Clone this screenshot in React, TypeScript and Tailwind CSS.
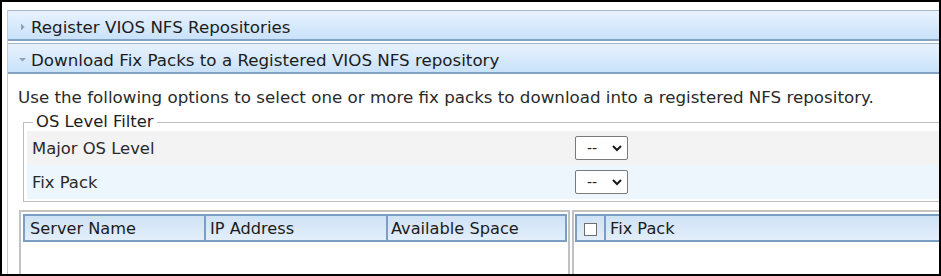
import React from 'react';

const font = { fontFamily: '"DejaVu Sans", Verdana, sans-serif' };

function SectionHeader({ title, open }: { title: string; open?: boolean }) {
  return (
    <div className="h-[31px] flex items-center border-t border-t-[#a4b6ca] border-b-2 border-b-[#83a2c4] bg-gradient-to-b from-[#e8f2fd] to-[#c9e2fa] pl-[11px] pt-[3px] text-[16.7px] text-[#1c1c1c]">
      <span className="w-[12px] flex items-center">
        {open ? (
          <svg width="8" height="8" viewBox="0 0 8 8">
            <path d="M0 2 L7 2 L3.5 5.5 Z" fill="#86a3c4" />
          </svg>
        ) : (
          <svg width="8" height="8" viewBox="0 0 8 8">
            <path d="M2 0.5 L5.5 4 L2 7.5 Z" fill="#86a3c4" />
          </svg>
        )}
      </span>
      <span className="whitespace-nowrap leading-[18px]">{title}</span>
    </div>
  );
}

function FakeSelect() {
  return (
    <div className="w-[53px] h-[24px] border border-[#7a7a7a] rounded-[2px] bg-white flex items-center justify-between pl-[11px] pr-[4px] text-[14px] text-[#222]">
      <span>--</span>
      <svg width="12" height="10" viewBox="0 0 12 10">
        <path d="M2 3 L6 7 L10 3" stroke="#1a1a1a" strokeWidth="2" fill="none" />
      </svg>
    </div>
  );
}

function FilterRow({ label, shade }: { label: string; shade: string }) {
  return (
    <div className={`h-[34px] flex items-center ${shade}`}>
      <div className="w-[548px] pl-[5px] pt-[2px] text-[16.4px] text-[#2a2a2a]">{label}</div>
      <FakeSelect />
    </div>
  );
}

export default function App() {
  return (
    <div className="w-[941px] h-[276px] border-2 border-black bg-white overflow-hidden" style={font}>
      <div className="mt-[8px] ml-[5px] w-[1000px] h-[300px] border-l border-[#c9c9c9]">
        <SectionHeader title="Register VIOS NFS Repositories" />
        <div className="h-[2px]" />
        <SectionHeader title="Download Fix Packs to a Registered VIOS NFS repository" open />

        <p className="mt-[14px] ml-[10px] text-[16.7px] leading-[18px] text-[#2a2a2a] whitespace-nowrap">
          Use the following options to select one or more fix packs to download into a registered NFS repository.
        </p>

        <fieldset className="mt-[7px] ml-[15px] border border-[#bdbdbd] px-[3px] pb-[2px] pt-[0px]">
          <legend className="ml-[6px] px-[3px] text-[16.4px] leading-[18px] text-[#1c1c1c]">OS Level Filter</legend>
          <FilterRow label="Major OS Level" shade="bg-[#f3f3f3]" />
          <FilterRow label="Fix Pack" shade="bg-[#edf5fd]" />
        </fieldset>

        <div className="mt-[8px] ml-[11px] flex gap-[2px] h-[70px]">
          <div className="w-[551px] border-l-2 border-t-2 border-r-2 border-[#c2c2c2] pt-[2px] pl-[2px] pr-[1px]">
            <div className="h-[28px] flex border-2 border-[#7d9ec4] bg-gradient-to-b from-[#cfe2f6] to-[#e3eefa] text-[16.2px] text-[#1c1c1c]">
              <div className="w-[181px] pl-[5px] pt-[2px] flex items-center border-r-2 border-[#7d9ec4]">Server Name</div>
              <div className="w-[182px] pl-[4px] pt-[2px] flex items-center border-r-2 border-[#7d9ec4]">IP Address</div>
              <div className="flex-1 pl-[3px] pt-[2px] flex items-center">Available Space</div>
            </div>
          </div>
          <div className="flex-1 border-l-2 border-t-2 border-[#c2c2c2] pt-[2px] pl-[1px]">
            <div className="h-[28px] flex border-2 border-[#7d9ec4] bg-gradient-to-b from-[#cfe2f6] to-[#e3eefa] text-[16.2px] text-[#1c1c1c]">
              <div className="w-[29px] pt-[2px] flex items-center justify-center border-r-2 border-[#7d9ec4]">
                <div className="w-[13px] h-[13px] border border-[#6f6f6f] bg-white" />
              </div>
              <div className="flex-1 pl-[4px] pt-[2px] flex items-center">Fix Pack</div>
            </div>
          </div>
        </div>
      </div>
    </div>
  );
}
